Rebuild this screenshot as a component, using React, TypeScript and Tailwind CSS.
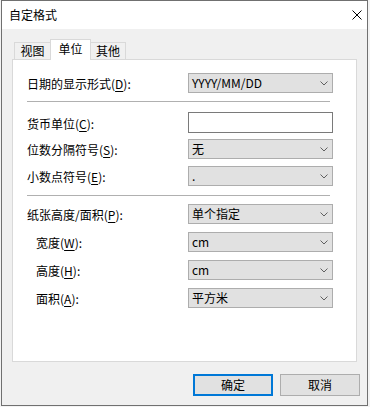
import React from "react"
import clsx from "clsx"

const font = "font-['Microsoft_YaHei','Noto_Sans_CJK_SC',sans-serif]"

function Chevron() {
  return (
    <svg width="8" height="5" viewBox="0 0 8 5" className="shrink-0">
      <polyline points="0.5,0.5 4,4 7.5,0.5" fill="none" stroke="#606060" strokeWidth="1" />
    </svg>
  )
}

function Select({ value }: { value: string }) {
  return (
    <div className="w-[145px] h-[20px] border border-[#adadad] bg-[#e1e1e1] flex items-center justify-between pl-[3px] pr-[4px] text-[12px] text-black leading-none">
      <span>{value}</span>
      <Chevron />
    </div>
  )
}

function Label({ text, k }: { text: string; k: string }) {
  return (
    <span className="text-[12px] text-black leading-none">
      {text}(<span className="underline decoration-1 underline-offset-[2px]">{k}</span>):
    </span>
  )
}

function Row({
  text,
  k,
  indent,
  className,
  children,
}: {
  text: string
  k: string
  indent?: boolean
  className?: string
  children: React.ReactNode
}) {
  return (
    <div className={clsx("flex items-center leading-none", className)}>
      <div className={clsx("w-[161px] shrink-0 text-[12px] leading-none pt-[2px]", indent && "pl-[9px]")}>
        <Label text={text} k={k} />
      </div>
      {children}
    </div>
  )
}

function Separator({ className }: { className?: string }) {
  return <div className={clsx("w-[303px] h-px bg-[#b0b0b0]", className)} />
}

export default function App() {
  return (
    <div className={clsx("w-[370px] h-[407px] bg-[#f3f3f3]", font)}>
      <div className="ml-[1px] w-[367px] h-[406px] border border-[#707070] bg-[#f0f0f0] flex flex-col">
        {/* Title bar */}
        <div className="h-[28px] bg-white flex items-center justify-between pl-[7px] pr-[5px] shrink-0">
          <span className="text-[12px] text-black">自定格式</span>
          <svg width="10" height="10" viewBox="0 0 10 10">
            <path d="M0.5 0.5 L9.5 9.5 M9.5 0.5 L0.5 9.5" stroke="#000" strokeWidth="1" />
          </svg>
        </div>

        <div className="flex-1 flex flex-col pl-[10px] pt-[10px]">
          {/* Tabs */}
          <div className="flex items-end h-[20px] pl-[2px] relative z-10">
            <div className="h-[17px] w-[37px] border border-b-0 border-[#d9d9d9] bg-[#f0f0f0] flex items-center justify-center text-[12px] text-black">
              视图
            </div>
            <div className="h-[21px] w-[41px] -mb-px -ml-px border border-b-0 border-[#d9d9d9] bg-white flex items-center justify-center text-[12px] text-black pb-[2px]">
              单位
            </div>
            <div className="h-[17px] w-[36px] -ml-px border border-b-0 border-[#d9d9d9] bg-[#f0f0f0] flex items-center justify-center text-[12px] text-black">
              其他
            </div>
          </div>

          {/* Panel */}
          <div className="w-[345px] h-[303px] border border-[#d9d9d9] bg-white flex flex-col pl-[14px] pt-[13px]">
            <Row text="日期的显示形式" k="D">
              <Select value="YYYY/MM/DD" />
            </Row>
            <Separator className="mt-[8px]" />
            <Row text="货币单位" k="C" className="mt-[10px]">
              <div className="w-[145px] h-[21px] border border-[#7a7a7a] bg-white" />
            </Row>
            <Row text="位数分隔符号" k="S" className="mt-[6px]">
              <Select value="无" />
            </Row>
            <Row text="小数点符号" k="E" className="mt-[7px]">
              <Select value="." />
            </Row>
            <Separator className="mt-[9px]" />
            <Row text="纸张高度/面积" k="P" className="mt-[8px]">
              <Select value="单个指定" />
            </Row>
            <Row text="宽度" k="W" indent className="mt-[8px]">
              <Select value="cm" />
            </Row>
            <Row text="高度" k="H" indent className="mt-[8px]">
              <Select value="cm" />
            </Row>
            <Row text="面积" k="A" indent className="mt-[8px]">
              <Select value="平方米" />
            </Row>
          </div>

          {/* Buttons */}
          <div className="flex justify-end gap-[7px] pr-[7px] mt-[12px]">
            <button className="w-[80px] h-[22px] border-2 border-[#0078d7] bg-[#e1e1e1] text-[12px] text-black flex items-center justify-center">
              确定
            </button>
            <button className="w-[80px] h-[22px] border border-[#adadad] bg-[#e1e1e1] text-[12px] text-black flex items-center justify-center">
              取消
            </button>
          </div>
        </div>
      </div>
    </div>
  )
}
